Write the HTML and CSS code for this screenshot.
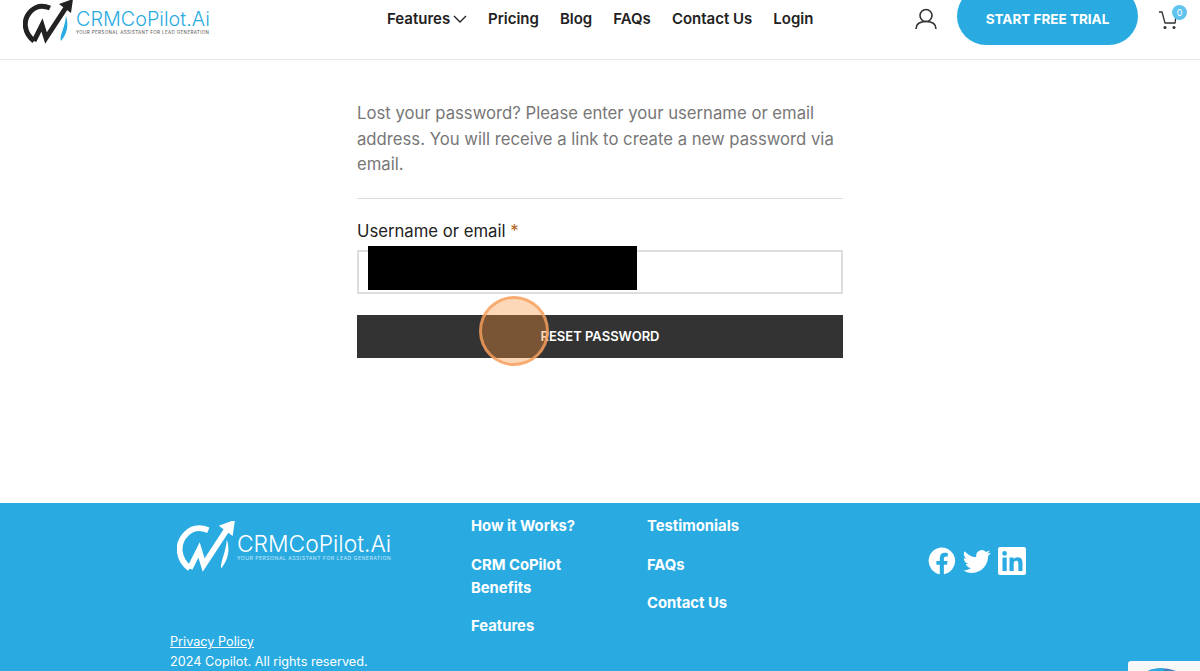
FILE: index.html
```html
<!DOCTYPE html>
<html lang="en">
<head>
  <meta charset="UTF-8">
  <meta name="viewport" content="width=device-width, initial-scale=1.0">
  <title>Lost password - CRMCoPilot.Ai</title>
  <link rel="stylesheet" href="styles.css">
</head>
<body>
  <header class="site-header">
    <a class="logo" href="#">
      <svg class="logo-mark" width="50" height="44" viewBox="0 0 50 44">
        <path d="M11 41C1 33 -1 20 8 11C13 6 20 5 27 8M11 41L19 25L23 38L44 6" fill="none" stroke="#222" stroke-width="5"/>
        <path d="M36 4L50 -1L48 13Z" fill="#222"/>
        <path d="M43 16C46 25 44 34 38 41C36 36 42 28 43 16Z" fill="#29abe2"/>
      </svg>
      <span class="logo-text">
        <span class="logo-name">CRMCoPilot.Ai</span>
        <span class="logo-tag">YOUR PERSONAL ASSISTANT FOR LEAD GENERATION</span>
      </span>
    </a>
    <nav class="main-nav">
      <a href="#">Features
        <svg width="14" height="8" viewBox="0 0 14 8"><path d="M1 1l6 6 6-6" fill="none" stroke="#222" stroke-width="1.4"/></svg>
      </a>
      <a href="#">Pricing</a>
      <a href="#">Blog</a>
      <a href="#">FAQs</a>
      <a href="#">Contact Us</a>
      <a href="#">Login</a>
    </nav>
    <a class="account" href="#">
      <svg width="22" height="22" viewBox="0 0 22 22"><circle cx="11" cy="7.500" r="6" fill="none" stroke="#333" stroke-width="1.6"/><path d="M1 21c0-5 4-7.500 10-7.500s10 2.500 10 7.500" fill="none" stroke="#333" stroke-width="1.6"/></svg>
    </a>
    <a class="trial-btn" href="#">START FREE TRIAL</a>
    <a class="cart" href="#">
      <svg width="20" height="20" viewBox="0 0 20 20"><path d="M1 2h3l3 11h10l1-7" fill="none" stroke="#333" stroke-width="1.3"/><circle cx="7" cy="17.500" r="1.500" fill="#333"/><circle cx="16" cy="17.500" r="1.500" fill="#333"/></svg>
      <span class="cart-count">0</span>
    </a>
  </header>

  <main class="content">
    <p class="intro">Lost your password? Please enter your username or email address. You will receive a link to create a new password via email.</p>
    <hr class="divider">
    <form class="reset-form">
      <label for="user">Username or email <span class="req">*</span></label>
      <div class="field">
        <input type="text" id="user">
        <div class="redacted"></div>
      </div>
      <div class="submit-wrap">
        <button type="button">RESET PASSWORD</button>
        <div class="click-mark"></div>
      </div>
    </form>
  </main>

  <footer class="site-footer">
    <div class="footer-brand">
      <a class="logo logo-light" href="#">
        <svg class="logo-mark" width="58" height="51" viewBox="0 0 50 44">
          <path d="M11 41C1 33 -1 20 8 11C13 6 20 5 27 8M11 41L19 25L23 38L44 6" fill="none" stroke="#fff" stroke-width="5"/>
          <path d="M36 4L50 -1L48 13Z" fill="#fff"/>
          <path d="M43 16C46 25 44 34 38 41C37 36 42 28 43 16Z" fill="#fff"/>
        </svg>
        <span class="logo-text">
          <span class="logo-name">CRMCoPilot.Ai</span>
          <span class="logo-tag">YOUR PERSONAL ASSISTANT FOR LEAD GENERATION</span>
        </span>
      </a>
      <div class="legal">
        <a href="#">Privacy Policy</a>
        <p>2024 Copilot. All rights reserved.</p>
      </div>
    </div>
    <ul class="footer-links links-one">
      <li><a href="#">How it Works?</a></li>
      <li><a href="#">CRM CoPilot Benefits</a></li>
      <li><a href="#">Features</a></li>
    </ul>
    <ul class="footer-links links-two">
      <li><a href="#">Testimonials</a></li>
      <li><a href="#">FAQs</a></li>
      <li><a href="#">Contact Us</a></li>
    </ul>
    <div class="social">
      <svg width="28" height="28" viewBox="0 0 28 28"><path d="M14 .5a13.500 13.500 0 0 0-2.200 26.800V17.800H8.400V14h3.400v-3c0-3.400 2-5.200 5-5.200 1.500 0 3 .3 3 .3v3.300h-1.700c-1.700 0-2.200 1-2.200 2.100V14h3.700l-.6 3.800h-3.100v9.500A13.500 13.500 0 0 0 14 .5z" fill="#fff"/></svg>
      <svg width="28" height="28" viewBox="0 0 24 24"><path d="M23.500 4.900c-.9.400-1.800.6-2.800.8 1-.6 1.800-1.500 2.100-2.700-.9.600-2 1-3.100 1.200a4.900 4.900 0 0 0-8.300 4.500C7.400 8.500 3.800 6.500 1.400 3.600a4.900 4.900 0 0 0 1.500 6.500c-.8 0-1.500-.2-2.200-.6v.1c0 2.400 1.700 4.400 3.900 4.800-.7.200-1.500.2-2.200.1.600 2 2.400 3.400 4.600 3.400A9.900 9.900 0 0 1 0 20c2.200 1.400 4.800 2.200 7.500 2.200 9.100 0 14-7.500 14-14v-.6c1-.7 1.800-1.600 2-2.700z" fill="#fff"/></svg>
      <svg class="linkedin" width="28" height="28" viewBox="0 0 28 28"><path d="M2 0h24a2 2 0 0 1 2 2v24a2 2 0 0 1-2 2H2a2 2 0 0 1-2-2V2a2 2 0 0 1 2-2zm2.500 10.500V24h4.200V10.500zM6.600 4a2.400 2.400 0 1 0 0 4.800 2.400 2.400 0 0 0 0-4.800zM11.500 10.500V24h4.200v-6.700c0-1.800.4-3.500 2.500-3.500s2.200 2 2.200 3.600V24h4.100v-7.400c0-3.600-.8-6.400-5-6.400-2 0-3.300 1.100-3.900 2.100v-1.800z" fill="#fff" fill-rule="evenodd"/></svg>
    </div>
    <div class="recaptcha">
      <svg width="48" height="10" viewBox="0 0 48 10"><path d="M8 10C14 7 24 6 36 10Z" fill="#3f7fb5"/><path d="M8 10C12 8 18 7 24 7.500L24 10Z" fill="#29abe2"/></svg>
    </div>
  </footer>
</body>
</html>
```

FILE: styles.css
```css
* {
  box-sizing: border-box;
}
html, body {
  height: 100%;
}
body {
  font-family: 'Inter', 'Open Sans', sans-serif;
  background-color: #fff;
  margin: 0;
  color: #222;
  height: 671px;
  overflow: hidden;
  display: flex;
  flex-direction: column;
}
a {
  color: inherit;
  text-decoration: none;
}

/* header */
.site-header {
  display: flex;
  align-items: flex-start;
  height: 60px;
  flex: none;
  padding-left: 23px;
  border-bottom: 1px solid #e8e8e8;
}
.logo {
  display: flex;
  align-items: flex-start;
  gap: 3px;
  width: 364px;
  flex: none;
}
.logo-text {
  display: flex;
  flex-direction: column;
  padding-top: 9px;
}
.logo-name {
  font-size: 19.800px;
  font-weight: 300;
  line-height: 21px;
  color: #29abe2;
}
.logo-tag {
  font-size: 4.500px;
  line-height: 6px;
  letter-spacing: .38px;
  color: #555;
  white-space: nowrap;
}
.main-nav {
  display: flex;
  gap: 21px;
  width: 528px;
  flex: none;
  padding-top: 10px;
  font-size: 15px;
  font-weight: 600;
  line-height: 18px;
}
.main-nav svg {
  margin-left: -1px;
  vertical-align: 1px;
}
.account {
  width: 42px;
  flex: none;
  padding-top: 8px;
}
.trial-btn {
  display: flex;
  align-items: center;
  justify-content: center;
  width: 181px;
  height: 58px;
  margin-top: -13px;
  flex: none;
  background-color: #29abe2;
  color: #fff;
  border-radius: 29px;
  font-size: 13.500px;
  font-weight: 700;
  padding-top: 6px;
}
.cart {
  position: relative;
  margin-left: 20px;
  padding-top: 10px;
}
.cart-count {
  position: absolute;
  top: 5px;
  left: 14px;
  width: 15px;
  height: 15px;
  border-radius: 50%;
  background-color: #5fc3ee;
  color: #fff;
  font-size: 9px;
  line-height: 15px;
  text-align: center;
}

/* reset form */
.content {
  flex: none;
  height: 443px;
  width: 486px;
  margin: 0 auto;
  padding-top: 41px;
}
.intro {
  margin: 0;
  font-size: 16.700px;
  line-height: 25.600px;
  color: #777;
}
.divider {
  margin: 20px 0 19px;
  border: none;
  border-top: 1px solid #ddd;
}
label {
  display: block;
  font-size: 16.700px;
  line-height: 27px;
  margin-bottom: 5px;
}
.req {
  color: #b5651d;
}
.field {
  position: relative;
  margin-bottom: 21px;
}
input {
  display: block;
  width: 100%;
  height: 44px;
  border: 2px solid #ddd;
  background-color: #fff;
}
.redacted {
  position: absolute;
  top: -4px;
  left: 11px;
  width: 269px;
  height: 44px;
  background-color: #000;
}
.submit-wrap {
  position: relative;
}
button {
  display: block;
  width: 100%;
  height: 43px;
  border: none;
  background-color: #333;
  color: #fff;
  font-family: inherit;
  font-size: 13px;
  font-weight: 600;
}
.click-mark {
  position: absolute;
  top: -19px;
  left: 122px;
  width: 70px;
  height: 70px;
  border-radius: 50%;
  background-color: rgba(248, 148, 60, .36);
  border: 3px solid rgba(245, 160, 95, .8);
}

/* footer */
.site-footer {
  position: relative;
  flex: none;
  height: 168px;
  display: flex;
  background-color: #29abe2;
  color: #fff;
  padding: 12px 0 0 170px;
}
.footer-brand {
  width: 301px;
  flex: none;
}
.logo-light {
  width: auto;
  padding: 6px 0 0 7px;
  gap: 2px;
  height: 117px;
}
.logo-light .logo-text {
  padding-top: 11px;
}
.logo-light .logo-name {
  font-size: 22.800px;
  line-height: 23px;
  color: #fff;
}
.logo-light .logo-tag {
  color: #fff;
  font-size: 5.200px;
  letter-spacing: .45px;
  opacity: .7;
}
.legal {
  font-size: 12.700px;
  line-height: 20px;
}
.legal a {
  text-decoration: underline;
}
.legal p {
  margin: 0;
}
.footer-links {
  list-style: none;
  margin: 0;
  padding: 0;
  flex: none;
  font-size: 14.800px;
  font-weight: 700;
  line-height: 23px;
}
.footer-links li {
  margin-bottom: 15.500px;
}
.links-one {
  width: 110px;
  margin-right: 66px;
}
.links-two {
  width: 281px;
}
.social {
  display: flex;
  gap: 7px;
  padding-top: 32px;
}
.recaptcha {
  position: absolute;
  top: 158px;
  left: 1128px;
  width: 72px;
  height: 10px;
  padding-left: 12px;
  border-radius: 3px 0 0 0;
  background-color: #f8f8f8;
}
.recaptcha svg {
  display: block;
}
```
